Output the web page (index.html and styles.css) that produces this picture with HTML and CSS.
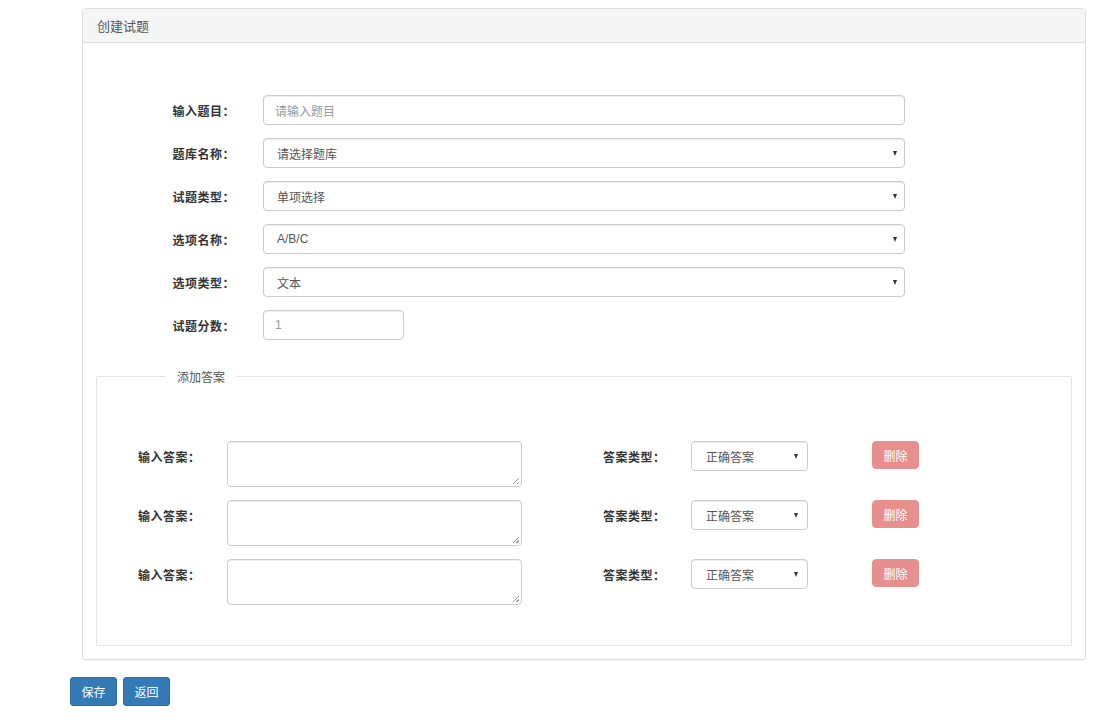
FILE: index.html
```html
<!DOCTYPE html>
<html lang="zh-CN">
<head>
<meta charset="utf-8">
<title>创建试题</title>
<link rel="stylesheet" href="styles.css">
</head>
<body>
<div class="page">
  <div class="panel">
    <div class="panel-heading">创建试题</div>
    <div class="panel-body">
      <div class="form">
        <div class="form-row">
          <label class="label">输入题目：</label>
          <div class="control input placeholder">请输入题目</div>
        </div>
        <div class="form-row">
          <label class="label">题库名称：</label>
          <div class="control select"><span>请选择题库</span><i class="caret"></i></div>
        </div>
        <div class="form-row">
          <label class="label">试题类型：</label>
          <div class="control select"><span>单项选择</span><i class="caret"></i></div>
        </div>
        <div class="form-row">
          <label class="label">选项名称：</label>
          <div class="control select"><span>A/B/C</span><i class="caret"></i></div>
        </div>
        <div class="form-row">
          <label class="label">选项类型：</label>
          <div class="control select"><span>文本</span><i class="caret"></i></div>
        </div>
        <div class="form-row">
          <label class="label">试题分数：</label>
          <div class="control input placeholder short">1</div>
        </div>
      </div>

      <fieldset class="answers">
        <legend>添加答案</legend>
        <div class="answer-row">
          <label class="alabel">输入答案：</label>
          <div class="textarea"><i class="grip"></i></div>
          <label class="tlabel">答案类型：</label>
          <div class="control select small"><span>正确答案</span><i class="caret"></i></div>
          <button class="btn-del">删除</button>
        </div>
        <div class="answer-row">
          <label class="alabel">输入答案：</label>
          <div class="textarea"><i class="grip"></i></div>
          <label class="tlabel">答案类型：</label>
          <div class="control select small"><span>正确答案</span><i class="caret"></i></div>
          <button class="btn-del">删除</button>
        </div>
        <div class="answer-row">
          <label class="alabel">输入答案：</label>
          <div class="textarea"><i class="grip"></i></div>
          <label class="tlabel">答案类型：</label>
          <div class="control select small"><span>正确答案</span><i class="caret"></i></div>
          <button class="btn-del">删除</button>
        </div>
      </fieldset>
    </div>
  </div>
  <div class="actions">
    <button class="btn-primary">保存</button>
    <button class="btn-primary">返回</button>
  </div>
</div>
</body>
</html>
```

FILE: styles.css
```css
* { box-sizing: border-box; }
html, body {
  margin: 0;
  padding: 0;
  background: #fff;
}
body {
  font-family: "Liberation Sans", "Noto Sans CJK SC", sans-serif;
  font-size: 12px;
  color: #333;
}
.page {
  padding: 8px 0 0 70px;
}
.panel {
  margin-left: 12px;
  width: 1004px;
  border: 1px solid #ddd;
  border-radius: 4px;
  box-shadow: 0 1px 1px rgba(0,0,0,.05);
  background: #fff;
}
.panel-heading {
  height: 34px;
  padding: 0 14px;
  display: flex;
  align-items: center;
  background: #f5f5f5;
  border-bottom: 1px solid #ddd;
  border-radius: 3px 3px 0 0;
  font-size: 13px;
  color: #555;
}
.panel-body {
  padding: 52px 13px 13px 13px;
}
.form {
  display: flex;
  flex-direction: column;
  gap: 13px;
}
.form-row {
  display: flex;
  align-items: center;
  height: 30px;
}
.label {
  width: 139px;
  text-align: right;
  font-weight: bold;
  color: #333;
  font-size: 12px;
  letter-spacing: 0.5px;
}
.control {
  height: 30px;
  border: 1px solid #ccc;
  border-radius: 4px;
  box-shadow: inset 0 1px 1px rgba(0,0,0,.075);
  background: #fff;
  display: flex;
  align-items: center;
  padding: 0 11px;
  color: #555;
  font-size: 12px;
}
.form-row .control {
  margin-left: 28px;
  width: 642px;
}
.form-row .control.short {
  width: 141px;
}
.placeholder { color: #999; }
.select {
  justify-content: space-between;
  padding: 0 7px 0 13px;
}
.caret {
  display: block;
  width: 0;
  height: 0;
  border-left: 2.5px solid transparent;
  border-right: 2.5px solid transparent;
  border-top: 5px solid #333;
}
.answers {
  margin: 28px 0 0 0;
  padding: 56px 0 40px 0;
  border: 1px solid #e5e5e5;
  border-radius: 2px;
  display: flex;
  flex-direction: column;
  gap: 13px;
  min-width: 0;
}
.answers legend {
  margin-left: 69px;
  padding: 0 11px;
  color: #555;
  font-size: 12px;
}
.answer-row {
  display: flex;
  align-items: flex-start;
  height: 46px;
}
.alabel, .tlabel {
  font-weight: bold;
  font-size: 12px;
  color: #333;
  padding-top: 7px;
  letter-spacing: 0.5px;
}
.alabel {
  margin-left: 41px;
  width: 89px;
}
.tlabel {
  margin-left: 81px;
  width: 88px;
}
.textarea {
  position: relative;
  width: 295px;
  height: 46px;
  border: 1px solid #ccc;
  border-radius: 4px;
  box-shadow: inset 0 1px 1px rgba(0,0,0,.075);
}
.grip {
  position: absolute;
  right: 2px;
  bottom: 2px;
  width: 6px;
  height: 6px;
  background: linear-gradient(135deg, transparent 45%, #999 45%, #999 55%, transparent 55%, transparent 75%, #999 75%, #999 85%, transparent 85%);
}
.control.small {
  width: 117px;
  padding: 0 9px 0 14px;
}
.btn-del {
  margin-left: 64px;
  width: 47px;
  height: 28px;
  border: 1px solid #e8908d;
  border-radius: 4px;
  background: #e68f8c;
  color: #fff;
  font-family: inherit;
  font-size: 12px;
  padding: 0;
}
.actions {
  display: flex;
  gap: 6px;
  margin-top: 17px;
}
.btn-primary {
  width: 47px;
  height: 29px;
  border: 1px solid #2e6da4;
  border-radius: 3px;
  background: #337ab7;
  color: #fff;
  font-family: inherit;
  font-size: 12px;
  padding: 0;
}
```
